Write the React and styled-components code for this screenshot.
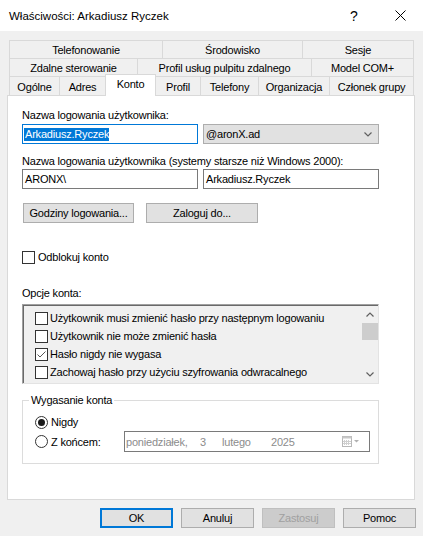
import React from 'react';
import styled, { createGlobalStyle } from 'styled-components';

const GlobalStyle = createGlobalStyle`
  html, body {
    margin: 0;
    padding: 0;
    background: #f0f0f0;
  }
  body {
    font-family: "Liberation Sans", Arial, sans-serif;
    font-size: 11px;
    letter-spacing: -0.2px;
    color: #000;
  }
`;

const Window = styled.div`
  width: 423px;
  height: 536px;
  background: #f0f0f0;
  display: flex;
  flex-direction: column;
  overflow: hidden;
`;

const TitleBar = styled.div`
  height: 31px;
  flex: none;
  background: #fff;
  display: flex;
  align-items: center;
  padding-left: 9px;
`;

const TitleText = styled.div`
  flex: 1;
  font-size: 11.5px;
  letter-spacing: 0;
`;

const CaptionButton = styled.div`
  width: 46px;
  height: 31px;
  display: flex;
  align-items: center;
  justify-content: center;
  font-size: 14px;
  letter-spacing: 0;
`;

const TabStrip = styled.div`
  margin: 9px 0 0 9px;
  width: 405px;
  display: flex;
  flex-direction: column;
`;

const TabRow = styled.div`
  display: flex;
  height: ${p => p.$h}px;
`;

const Tab = styled.div`
  flex: none;
  box-sizing: border-box;
  width: ${p => p.$w}px;
  border-top: 1px solid #d9d9d9;
  border-left: 1px solid #d9d9d9;
  border-right: ${p => (p.$last ? '1px solid #d9d9d9' : 'none')};
  background: #f0f0f0;
  display: flex;
  align-items: center;
  justify-content: center;
  white-space: nowrap;
  padding-top: 1px;
`;

const ActiveTab = styled(Tab)`
  position: relative;
  z-index: 2;
  width: ${p => p.$w + 1}px;
  margin: -2px -1px 0 0;
  height: 22px;
  background: #fff;
  border-right: 1px solid #d9d9d9;
  align-items: flex-start;
  padding-top: 3px;
`;

const Panel = styled.div`
  margin-left: 7px;
  width: 408px;
  height: 405px;
  box-sizing: border-box;
  flex: none;
  background: #fff;
  border: 1px solid #d9d9d9;
  padding: 12px 0 0 14px;
  display: flex;
  flex-direction: column;
`;

const Label = styled.div`
  line-height: 14px;
  height: 14px;
  margin-top: ${p => p.$mt || 0}px;
  white-space: nowrap;
`;

const FieldRow = styled.div`
  display: flex;
  gap: 5px;
  margin-top: ${p => p.$mt || 0}px;
`;

const TextBox = styled.div`
  box-sizing: border-box;
  width: 176px;
  height: 20px;
  border: 1px solid ${p => (p.$focused ? '#0078d7' : '#7a7a7a')};
  background: #fff;
  padding-left: 1px;
  display: flex;
  align-items: center;
  white-space: nowrap;
`;

const Selected = styled.span`
  background: #0078d7;
  color: #fff;
  line-height: 13px;
  padding-left: 1px;
`;

const Plain = styled.span`
  padding-left: 1px;
`;

const Combo = styled.div`
  box-sizing: border-box;
  width: 176px;
  height: 20px;
  border: 1px solid #adadad;
  background: #e1e1e1;
  display: flex;
  align-items: center;
  justify-content: space-between;
  padding: 0 6px 0 2px;
`;

const ButtonRow = styled.div`
  display: flex;
  gap: ${p => p.$gap}px;
  margin-top: ${p => p.$mt || 0}px;
  margin-left: ${p => p.$ml || 0}px;
`;

const Button = styled.div`
  box-sizing: border-box;
  width: ${p => p.$w}px;
  height: 20px;
  background: ${p => (p.$disabled ? '#cccccc' : '#e1e1e1')};
  color: ${p => (p.$disabled ? '#a0a0a0' : '#000')};
  border: ${p => (p.$default ? '2px solid #0078d7' : p.$disabled ? '1px solid #bfbfbf' : '1px solid #adadad')};
  display: flex;
  align-items: center;
  justify-content: center;
  white-space: nowrap;
`;

const CheckRow = styled.div`
  display: flex;
  align-items: center;
  height: ${p => p.$h || 18}px;
  gap: ${p => p.$gap || 2}px;
  margin-top: ${p => p.$mt || 0}px;
  white-space: nowrap;
`;

const Box = styled.div`
  box-sizing: border-box;
  width: 13px;
  height: 13px;
  flex: none;
  border: 1px solid #333;
  background: ${p => p.$bg || '#fff'};
  display: flex;
  align-items: center;
  justify-content: center;
`;

const ListBox = styled.div`
  box-sizing: border-box;
  width: 357px;
  height: 80px;
  margin-top: 4px;
  background: #f0f0f0;
  border-top: 1px solid #a0a0a0;
  border-left: 1px solid #a0a0a0;
  border-right: 1px solid #e3e3e3;
  border-bottom: 1px solid #e3e3e3;
  box-shadow: inset 1px 1px 0 #696969;
  display: flex;
`;

const ListItems = styled.div`
  flex: 1;
  padding: 4px 0 0 12px;
`;

const ScrollBar = styled.div`
  width: 16px;
  margin-top: 1px;
  display: flex;
  flex-direction: column;
  background: #f0f0f0;
`;

const ScrollArrow = styled.div`
  height: 17px;
  display: flex;
  align-items: center;
  justify-content: center;
`;

const ScrollThumb = styled.div`
  height: 17px;
  background: #cdcdcd;
`;

const ScrollTrack = styled.div`
  flex: 1;
`;

const GroupBox = styled.fieldset`
  box-sizing: border-box;
  width: 357px;
  margin: 9px 0 0 0;
  padding: 6px 0 11px 0;
  border: 1px solid #dcdcdc;
  min-inline-size: 0;
`;

const Legend = styled.legend`
  margin-left: 6px;
  padding: 0 2px;
  line-height: 14px;
`;

const GroupBody = styled.div`
  padding-left: 12px;
`;

const Radio = styled.div`
  box-sizing: border-box;
  width: 13px;
  height: 13px;
  flex: none;
  border: 1px solid #333;
  border-radius: 50%;
  background: #fff;
  display: flex;
  align-items: center;
  justify-content: center;
`;

const RadioDot = styled.div`
  width: 7px;
  height: 7px;
  border-radius: 50%;
  background: #1a1a1a;
`;

const RadioLabel = styled.div`
  width: ${p => p.$w}px;
`;

const DatePicker = styled.div`
  box-sizing: border-box;
  width: 246px;
  height: 21px;
  border: 1px solid #7a7a7a;
  background: #fff;
  color: #8c8c8c;
  display: flex;
  align-items: center;
  padding-left: 1px;
  white-space: nowrap;
`;

const DatePart = styled.span`
  width: ${p => p.$w}px;
  flex: none;
`;

const DateIcon = styled.div`
  margin-left: auto;
  margin-right: 9px;
  display: flex;
  align-items: center;
`;

const Footer = styled.div`
  flex: none;
  margin-top: 8px;
`;

const Chevron = ({ up }) => (
  <svg width="8" height="5" viewBox="0 0 8 5">
    <polyline
      points={up ? '0.5,4.5 4,1 7.5,4.5' : '0.5,0.5 4,4 7.5,0.5'}
      fill="none"
      stroke="#606060"
      strokeWidth="1.2"
    />
  </svg>
);

const CheckMark = () => (
  <svg width="11" height="11" viewBox="0 0 11 11">
    <polyline points="1.5,5.5 4,8 9.5,2.5" fill="none" stroke="#555" strokeWidth="1" />
  </svg>
);

const CalendarIcon = () => (
  <svg width="18" height="11" viewBox="0 0 18 11">
    <rect x="0.5" y="0.5" width="9" height="10" fill="#fff" stroke="#b8b8b8" />
    <rect x="0.5" y="0.5" width="9" height="2" fill="#c8c8c8" />
    <path d="M2.5 4v5M4.5 4v5M6.5 4v5M1 5.5h8M1 7.5h8" stroke="#cfcfcf" strokeWidth="1" />
    <polygon points="12,4 17,4 14.5,6.5" fill="#b0b0b0" />
  </svg>
);

const CloseIcon = () => (
  <svg width="11" height="11" viewBox="0 0 11 11">
    <path d="M0.5 0.5L10.5 10.5M10.5 0.5L0.5 10.5" stroke="#000" strokeWidth="1" />
  </svg>
);

const tabRows = [
  {
    h: 18,
    tabs: [
      { label: 'Telefonowanie', w: 153 },
      { label: 'Środowisko', w: 140 },
      { label: 'Sesje', w: 112 }
    ]
  },
  {
    h: 18,
    tabs: [
      { label: 'Zdalne sterowanie', w: 128 },
      { label: 'Profil usług pulpitu zdalnego', w: 174 },
      { label: 'Model COM+', w: 103 }
    ]
  },
  {
    h: 19,
    tabs: [
      { label: 'Ogólne', w: 50 },
      { label: 'Adres', w: 46 },
      { label: 'Konto', w: 50, active: true },
      { label: 'Profil', w: 45 },
      { label: 'Telefony', w: 58 },
      { label: 'Organizacja', w: 71 },
      { label: 'Członek grupy', w: 85 }
    ]
  }
];

const accountOptions = [
  { label: 'Użytkownik musi zmienić hasło przy następnym logowaniu', checked: false },
  { label: 'Użytkownik nie może zmienić hasła', checked: false },
  { label: 'Hasło nigdy nie wygasa', checked: true },
  { label: 'Zachowaj hasło przy użyciu szyfrowania odwracalnego', checked: false }
];

function App() {
  return (
    <>
      <GlobalStyle />
      <Window>
        <TitleBar>
          <TitleText>Właściwości: Arkadiusz Ryczek</TitleText>
          <CaptionButton>?</CaptionButton>
          <CaptionButton>
            <CloseIcon />
          </CaptionButton>
        </TitleBar>

        <TabStrip>
          {tabRows.map((row, rowIndex) => (
            <TabRow key={rowIndex} $h={row.h}>
              {row.tabs.map((tab, tabIndex) => {
                const last = tabIndex === row.tabs.length - 1;
                return tab.active ? (
                  <ActiveTab key={tabIndex} $w={tab.w}>
                    {tab.label}
                  </ActiveTab>
                ) : (
                  <Tab key={tabIndex} $w={tab.w} $last={last}>
                    {tab.label}
                  </Tab>
                );
              })}
            </TabRow>
          ))}
        </TabStrip>

        <Panel>
          <Label>Nazwa logowania użytkownika:</Label>
          <FieldRow $mt={2}>
            <TextBox $focused>
              <Selected>Arkadiusz.Ryczek</Selected>
            </TextBox>
            <Combo>
              <span>@aronX.ad</span>
              <Chevron />
            </Combo>
          </FieldRow>

          <Label $mt={10}>Nazwa logowania użytkownika (systemy starsze niż Windows 2000):</Label>
          <FieldRow $mt={1}>
            <TextBox>
              <Plain>ARONX\</Plain>
            </TextBox>
            <TextBox>
              <Plain>Arkadiusz.Ryczek</Plain>
            </TextBox>
          </FieldRow>

          <ButtonRow $gap={12} $mt={14} $ml={1}>
            <Button $w={111}>Godziny logowania...</Button>
            <Button $w={112}>Zaloguj do...</Button>
          </ButtonRow>

          <CheckRow $h={14} $gap={3} $mt={27}>
            <Box />
            Odblokuj konto
          </CheckRow>

          <Label $mt={22}>Opcje konta:</Label>
          <ListBox>
            <ListItems>
              {accountOptions.map((opt, i) => (
                <CheckRow key={i}>
                  <Box>{opt.checked && <CheckMark />}</Box>
                  {opt.label}
                </CheckRow>
              ))}
            </ListItems>
            <ScrollBar>
              <ScrollArrow>
                <Chevron up />
              </ScrollArrow>
              <ScrollThumb />
              <ScrollTrack />
              <ScrollArrow>
                <Chevron />
              </ScrollArrow>
            </ScrollBar>
          </ListBox>

          <GroupBox>
            <Legend>Wygasanie konta</Legend>
            <GroupBody>
              <CheckRow $gap={3}>
                <Radio>
                  <RadioDot />
                </Radio>
                Nigdy
              </CheckRow>
              <CheckRow $h={21} $gap={3}>
                <Radio />
                <RadioLabel $w={70}>Z końcem:</RadioLabel>
                <DatePicker>
                  <DatePart $w={74}>poniedziałek,</DatePart>
                  <DatePart $w={22}>3</DatePart>
                  <DatePart $w={49}>lutego</DatePart>
                  <DatePart $w={30}>2025</DatePart>
                  <DateIcon>
                    <CalendarIcon />
                  </DateIcon>
                </DatePicker>
              </CheckRow>
            </GroupBody>
          </GroupBox>
        </Panel>

        <Footer>
          <ButtonRow $gap={8} $ml={100}>
            <Button $w={73} $default>OK</Button>
            <Button $w={73}>Anuluj</Button>
            <Button $w={73} $disabled>Zastosuj</Button>
            <Button $w={73}>Pomoc</Button>
          </ButtonRow>
        </Footer>
      </Window>
    </>
  );
}

export default App;
